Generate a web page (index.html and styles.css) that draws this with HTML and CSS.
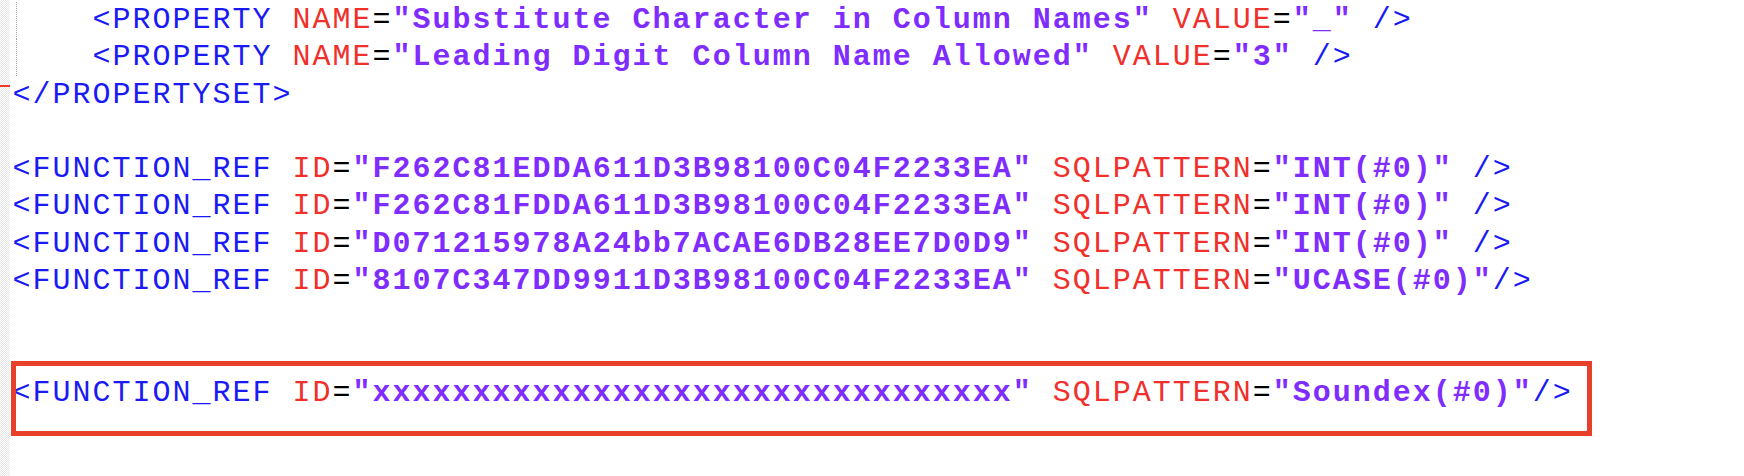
FILE: index.html
```html
<!DOCTYPE html>
<html>
<head>
<meta charset="utf-8">
<link rel="stylesheet" href="styles.css">
</head>
<body>
<div class="editor">
  <div class="gutter"><span class="fold-end"></span></div>
  <div class="code">
    <div class="row"><span class="indent"></span><span class="t">&lt;PROPERTY</span> <span class="a">NAME</span>=<span class="v">"Substitute Character in Column Names"</span> <span class="a">VALUE</span>=<span class="v">"_"</span> <span class="t">/&gt;</span></div>
    <div class="row"><span class="indent"></span><span class="t">&lt;PROPERTY</span> <span class="a">NAME</span>=<span class="v">"Leading Digit Column Name Allowed"</span> <span class="a">VALUE</span>=<span class="v">"3"</span> <span class="t">/&gt;</span></div>
    <div class="row"><span class="t">&lt;/PROPERTYSET&gt;</span></div>
    <div class="row"></div>
    <div class="row"><span class="t">&lt;FUNCTION_REF</span> <span class="a">ID</span>=<span class="v">"F262C81EDDA611D3B98100C04F2233EA"</span> <span class="a">SQLPATTERN</span>=<span class="v">"INT(#0)"</span> <span class="t">/&gt;</span></div>
    <div class="row"><span class="t">&lt;FUNCTION_REF</span> <span class="a">ID</span>=<span class="v">"F262C81FDDA611D3B98100C04F2233EA"</span> <span class="a">SQLPATTERN</span>=<span class="v">"INT(#0)"</span> <span class="t">/&gt;</span></div>
    <div class="row"><span class="t">&lt;FUNCTION_REF</span> <span class="a">ID</span>=<span class="v">"D071215978A24bb7ACAE6DB28EE7D0D9"</span> <span class="a">SQLPATTERN</span>=<span class="v">"INT(#0)"</span> <span class="t">/&gt;</span></div>
    <div class="row"><span class="t">&lt;FUNCTION_REF</span> <span class="a">ID</span>=<span class="v">"8107C347DD9911D3B98100C04F2233EA"</span> <span class="a">SQLPATTERN</span>=<span class="v">"UCASE(#0)"</span><span class="t">/&gt;</span></div>
    <div class="row"></div>
    <div class="row"></div>
    <div class="row"><span class="t">&lt;FUNCTION_REF</span> <span class="a">ID</span>=<span class="v">"xxxxxxxxxxxxxxxxxxxxxxxxxxxxxxxx"</span> <span class="a">SQLPATTERN</span>=<span class="v">"Soundex(#0)"</span><span class="t">/&gt;</span></div>
  </div>
  <div class="highlight"></div>
</div>
</body>
</html>
```
FILE: styles.css
```css
html, body {
  margin: 0;
  padding: 0;
  background: #ffffff;
}

.editor {
  position: relative;
  display: flex;
  width: 1744px;
  height: 476px;
  overflow: hidden;
  background: #ffffff;
}

.gutter {
  flex: 0 0 10px;
  display: flex;
  flex-direction: column;
  background: repeating-conic-gradient(#e6e6e6 0 25%, #ffffff 0 50%) 0 0 / 2px 2px;
}

.fold-end {
  display: block;
  margin-top: 85px;
  height: 2px;
  background: #f03a2a;
}

.code {
  flex: 1;
  padding-top: 2px;
  padding-left: 2.5px;
  font-family: "Courier New", "Liberation Mono", monospace;
  font-size: 30px;
  letter-spacing: 2px;
  color: #000000;
}

.row {
  height: 37.3px;
  line-height: 37.3px;
  white-space: pre;
}

.indent {
  display: inline-block;
  width: 80px;
  height: 37.3px;
  vertical-align: top;
  background: linear-gradient(#a0a0a0 50%, transparent 0) 3px 0 / 1px 2px repeat-y;
}

.t {
  color: #1a1af5;
}

.a {
  color: #f0302a;
}

.v {
  color: #7f2cff;
  font-weight: bold;
}

.highlight {
  position: absolute;
  left: 11px;
  top: 361px;
  width: 1581px;
  height: 75px;
  box-sizing: border-box;
  border: 5px solid #e8412b;
}
```
